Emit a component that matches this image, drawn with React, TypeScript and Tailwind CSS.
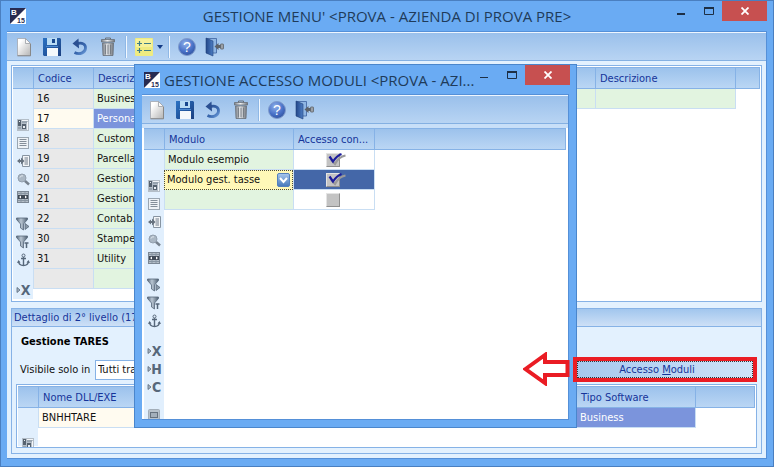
import React from "react";

const UI_FONT = "font-['DejaVu_Sans_Condensed','DejaVu_Sans',sans-serif]";
const TITLE_FONT = "font-['Open_Sans','Noto_Sans',sans-serif] text-[15px] leading-5 text-[#1f3b5a]";
const HEAD_BG = "bg-gradient-to-b from-[#9cc2ec] to-[#bad6f4]";

function Defs() {
  return (
    <svg width="0" height="0" className="absolute" aria-hidden="true">
      <defs>
        <linearGradient id="paper" x1="0" y1="0" x2="1" y2="1">
          <stop offset="0.2" stopColor="#ffffff" />
          <stop offset="1" stopColor="#b4b4b4" />
        </linearGradient>
        <linearGradient id="metal" x1="0" y1="0" x2="1" y2="0">
          <stop offset="0" stopColor="#7d828a" />
          <stop offset="0.45" stopColor="#f0f2f4" />
          <stop offset="1" stopColor="#70757d" />
        </linearGradient>
        <linearGradient id="disk" x1="0" y1="0" x2="1" y2="1">
          <stop offset="0" stopColor="#2a72c4" />
          <stop offset="1" stopColor="#1b3f80" />
        </linearGradient>
        <linearGradient id="arc" x1="0" y1="0" x2="1" y2="1">
          <stop offset="0" stopColor="#2a4f92" />
          <stop offset="0.6" stopColor="#3a69b0" />
          <stop offset="1" stopColor="#6b9ad8" />
        </linearGradient>
        <radialGradient id="ball" cx="0.4" cy="0.3" r="0.75">
          <stop offset="0" stopColor="#8fb0ea" />
          <stop offset="0.6" stopColor="#4a72c8" />
          <stop offset="1" stopColor="#2f519d" />
        </radialGradient>
        <linearGradient id="door" x1="0" y1="0" x2="1" y2="0">
          <stop offset="0" stopColor="#24488a" />
          <stop offset="1" stopColor="#4c7cc2" />
        </linearGradient>
        <linearGradient id="funnel" x1="0" y1="0" x2="1" y2="0">
          <stop offset="0" stopColor="#56677b" />
          <stop offset="0.4" stopColor="#b9c6d3" />
          <stop offset="1" stopColor="#4f6072" />
        </linearGradient>
        <linearGradient id="drop" x1="0" y1="0" x2="0" y2="1">
          <stop offset="0" stopColor="#a9c8ee" />
          <stop offset="1" stopColor="#4677ba" />
        </linearGradient>
      </defs>
    </svg>
  );
}

function AppLogo() {
  return (
    <svg width="16" height="16" viewBox="0 0 16 16" className="shrink-0" aria-hidden="true">
      <rect width="16" height="16" fill="#fff" />
      <path d="M0 0h16L0 16z" fill="#272b52" />
      <text x="1" y="7" fontSize="8" fontWeight="bold" fill="#fff" fontFamily="Liberation Sans">B</text>
      <text x="7" y="15" fontSize="7" fontWeight="bold" fill="#272b52" fontFamily="Liberation Sans">15</text>
    </svg>
  );
}

function NewIcon() {
  return (
    <svg width="18" height="20" viewBox="0 0 18 20">
      <path d="M2.500 1.500h8l5 5v12h-13z" fill="url(#paper)" stroke="#a3a7ae" strokeWidth="0.8" />
      <path d="M10.500 1.500v5h5z" fill="#f8f8f8" stroke="#9a9ea5" strokeWidth="0.8" />
      <path d="M2.500 18.800h13V7" fill="none" stroke="#888" strokeWidth="1" />
    </svg>
  );
}
function SaveIcon() {
  return (
    <svg width="20" height="20" viewBox="0 0 20 20">
      <path d="M1 1h17l1 1v17H2l-1-1z" fill="url(#disk)" />
      <rect x="5" y="1" width="10" height="7" fill="#b9dcf5" />
      <rect x="10" y="2" width="3" height="4" fill="#18488f" />
      <rect x="5" y="11" width="11" height="8" fill="#f4f8fb" />
      <path d="M4 9.500h12" stroke="#4d8ad0" strokeWidth="1" />
    </svg>
  );
}
function UndoIcon() {
  return (
    <svg width="18" height="20" viewBox="0 0 18 20">
      <path d="M6 6.800C11 4.800 15 7.500 14.500 11.500 14 16 8.500 18 3.500 15.500" fill="none" stroke="url(#arc)" strokeWidth="2.800" />
      <path d="M7.500 1.500L1.500 6.500l6.500 5z" fill="#2a4f92" />
    </svg>
  );
}
function TrashIcon() {
  return (
    <svg width="16" height="20" viewBox="0 0 16 20">
      <path d="M5.500 2.500V1h5v1.500" fill="none" stroke="#6a7078" />
      <path d="M1.500 2.500h13v2.500h-13z" fill="url(#metal)" stroke="#686e76" strokeWidth="0.8" />
      <path d="M2.500 6h11L13 18.500H3z" fill="url(#metal)" stroke="#686e76" strokeWidth="0.8" />
      <path d="M5.300 7.500v10M8 7.500v10M10.700 7.500v10" stroke="#6a7078" strokeWidth="1" />
    </svg>
  );
}
function ListIcon() {
  return (
    <svg width="18" height="18" viewBox="0 0 18 18">
      <rect width="18" height="18" rx="1" fill="#efeb80" />
      <rect x="1" y="1" width="16" height="8" fill="#faf7ae" opacity="0.6" />
      <path d="M2 5.500h5M4.500 3v5M2 12.500h5M4.500 10v5M9 5.500h7M9 12.500h7" stroke="#3e7c85" strokeWidth="1.200" />
    </svg>
  );
}
function HelpIcon() {
  return (
    <svg width="20" height="20" viewBox="0 0 20 20">
      <circle cx="10" cy="10" r="8.500" fill="url(#ball)" stroke="#7f9bcc" strokeWidth="1" />
      <text x="10" y="15" fontSize="14" textAnchor="middle" fill="#fff" fontFamily="Liberation Sans">?</text>
    </svg>
  );
}
function ExitIcon() {
  return (
    <svg width="20" height="20" viewBox="0 0 20 20">
      <path d="M1.500 1.500h10V16h-10z" fill="#8fb6e4" stroke="#3d62a0" strokeWidth="0.800" />
      <path d="M1 1l7 3v15l-7-3z" fill="url(#door)" stroke="#24437c" strokeWidth="0.600" />
      <path d="M9.500 9.500L13.500 6v2H16v3h-2.500v2z" fill="#5d636b" />
      <rect x="15.500" y="7" width="3" height="5" rx="0.500" fill="#9ba0a6" stroke="#5d636b" strokeWidth="0.800" />
    </svg>
  );
}

function ToolButton({ label, children }: { label: string; children: React.ReactNode }) {
  return (
    <button type="button" aria-label={label} className="flex h-7 w-7 items-center justify-center">
      {children}
    </button>
  );
}
function Separator() {
  return (
    <span className="flex w-2 justify-center">
      <span className="h-[22px] w-[2px] border-l border-[#8fb8e6] bg-[#f2f8ff]" />
    </span>
  );
}
function Toolbar({ full }: { full?: boolean }) {
  return (
    <div
      className={
        "flex h-[29px] shrink-0 items-center border-b border-t border-b-[#84b0e2] border-t-[#eef6ff] bg-gradient-to-b from-[#9ac0eb] to-[#b8d4f3] " +
        (full ? "px-[3px]" : "px-px")
      }
    >
      <ToolButton label="Nuovo"><NewIcon /></ToolButton>
      <ToolButton label="Salva"><SaveIcon /></ToolButton>
      <ToolButton label="Ripristina"><UndoIcon /></ToolButton>
      <ToolButton label="Elimina"><TrashIcon /></ToolButton>
      <Separator />
      {full && (
        <>
          <button type="button" aria-label="Opzioni" className="flex h-7 w-[35px] items-center gap-1 pl-[5px]">
            <ListIcon />
            <svg width="6" height="4" viewBox="0 0 6 4"><path d="M0 0h6L3 4z" fill="#123a85" /></svg>
          </button>
          <Separator />
        </>
      )}
      <ToolButton label="Guida"><HelpIcon /></ToolButton>
      <ToolButton label="Esci"><ExitIcon /></ToolButton>
    </div>
  );
}

const DARK = "#56677a";

function Letter({ children }: { children: string }) {
  return (
    <svg width="14" height="18" viewBox="0 0 14 18" className="overflow-visible">
      <path d="M1 6.500v5L4 9z" fill="#a9b6c4" stroke={DARK} strokeWidth="0.800" />
      <text x="9.500" y="14" fontSize="14" fontWeight="bold" textAnchor="middle" fill={DARK} fontFamily="'Liberation Sans Narrow','DejaVu Sans Condensed'">
        {children}
      </text>
    </svg>
  );
}
function Funnel({ children }: { children: React.ReactNode }) {
  return (
    <svg width="14" height="14" viewBox="0 0 14 14">
      <path d="M.5 1h11v1.500L7.500 7v6l-3-2V7L.5 2.500z" fill="url(#funnel)" stroke={DARK} strokeWidth="0.800" />
      {children}
    </svg>
  );
}

const SIDE_ICONS: { name: string; gap?: boolean; big?: boolean; icon: React.ReactNode }[] = [
  {
    name: "Struttura",
    icon: (
      <svg width="12" height="12" viewBox="0 0 12 12">
        <path d="M0 0h12v12H0z" fill="#b4bec8" />
        <path d="M1 1h3v6H1zM5 5h4v5H5z" fill="#56626f" />
        <path d="M2 2h1v1H2zM6 7h2v2H6z" fill="#e9eef3" />
        <path d="M5 1.500h6M10.500 3v8" fill="none" stroke="#f3f6f9" />
        <path d="M5 3h5M1 9h3" fill="none" stroke="#7d8a97" />
      </svg>
    ),
  },
  {
    name: "Elenco",
    icon: (
      <svg width="12" height="12" viewBox="0 0 12 12">
        <rect x=".5" y=".5" width="11" height="11" fill="#eef2f6" stroke="#9aa6b2" />
        <path d="M2.500 2.500h7M2.500 4.500h7M2.500 6.500h7M2.500 8.500h7" stroke="#77828e" strokeWidth="0.900" />
      </svg>
    ),
  },
  {
    name: "Inserisci",
    icon: (
      <svg width="13" height="12" viewBox="0 0 13 12">
        <path d="M5.500.5h7v11h-7z" fill="#f3f6f9" stroke="#8794a2" />
        <path d="M7.500 3h3.500M7.500 5h3.500M7.500 7h3.500M7.500 9h3.500" stroke="#6f7b88" />
        <path d="M0 6l3-2.500v1.500h1V2.500L7.500 6 4 9.500V7H3v1.500z" fill="#66727f" />
      </svg>
    ),
  },
  {
    name: "Cerca",
    icon: (
      <svg width="13" height="13" viewBox="0 0 13 13">
        <path d="M7.500 7.500l4.500 4" stroke="#77828e" strokeWidth="2.500" />
        <circle cx="5" cy="5" r="4" fill="#aab7c4" stroke="#93a0ae" />
        <path d="M3 4.500c.5-1.500 2-2 3-1.500" stroke="#e8eef4" fill="none" />
      </svg>
    ),
  },
  {
    name: "Adatta",
    icon: (
      <svg width="12" height="12" viewBox="0 0 12 12">
        <rect x=".5" y=".5" width="11" height="11" fill="#b4bec8" stroke="#7b8794" />
        <path d="M1 2.500h10M1 9.500h10M4 1v10M8 1v10" stroke="#8895a2" />
        <rect x="1" y="4" width="10" height="4" fill="#414b57" />
        <path d="M2 6l2-1.500v3zM10 6L8 4.500v3z" fill="#fff" />
      </svg>
    ),
  },
  { name: "Filtra", gap: true, icon: <Funnel><path d="M9 6.500v6l4-3z" fill="#8c9aa9" stroke={DARK} strokeWidth="0.800" /></Funnel> },
  { name: "Filtra testo", icon: <Funnel><path d="M8.500 8h4M10.500 8v5" stroke={DARK} strokeWidth="1.500" /></Funnel> },
  {
    name: "Ancora",
    icon: (
      <svg width="13" height="14" viewBox="0 0 13 14">
        <circle cx="6.500" cy="2.500" r="1.500" fill="none" stroke={DARK} />
        <path d="M6.500 4v8.500M4 5.500h5M1.500 8.500c.5 3 2.500 4 5 4s4.500-1 5-4" fill="none" stroke={DARK} strokeWidth="1.400" />
        <path d="M0 10l1.500-3 2 2.500zM13 10l-1.500-3-2 2.500z" fill={DARK} />
      </svg>
    ),
  },
  { name: "Esporta X", gap: true, big: true, icon: <Letter>X</Letter> },
  { name: "Esporta H", icon: <Letter>H</Letter> },
  { name: "Esporta C", icon: <Letter>C</Letter> },
  {
    name: "Schermo",
    gap: true,
    big: true,
    icon: (
      <svg width="12" height="16" viewBox="0 0 12 16">
        <rect x=".5" y=".5" width="11" height="13" rx="1" fill="#b8c2cc" stroke="#a3aeb9" />
        <rect x="2.500" y="3.500" width="7" height="5" fill="#a3afbb" stroke="#66727f" />
      </svg>
    ),
  },
];

function SideStrip({ count }: { count: number }) {
  return (
    <div className="flex w-5 shrink-0 flex-col bg-[#e1effd]">
      <div className={"h-[22px] shrink-0 border-b border-t border-b-[#86b2e6] border-t-[#86b2e6] " + HEAD_BG} />
      <div className="flex flex-col pt-[27px]">
        {SIDE_ICONS.slice(0, count).map((s) => (
          <button
            key={s.name}
            type="button"
            aria-label={s.name}
            className={"flex h-[18px] w-5 shrink-0 items-center justify-center " + (s.big ? "mt-3" : s.gap ? "mt-[9px]" : "")}
          >
            {s.icon}
          </button>
        ))}
      </div>
    </div>
  );
}

function Th({ children, className = "" }: { children?: React.ReactNode; className?: string }) {
  return (
    <th
      scope="col"
      className={
        "h-[22px] overflow-hidden whitespace-nowrap border-b border-l border-t border-[#86b2e6] pb-0 pl-1 pr-0 pt-[2px] text-left font-normal text-[#15349a] " +
        HEAD_BG + " " + className
      }
    >
      {children}
    </th>
  );
}

const CELL = "h-5 overflow-hidden whitespace-nowrap border-b border-l border-[#c9def3] p-0 pl-[3px] ";

const MENU_ROWS: [string, string][] = [
  ["16", "Business"],
  ["17", "Persona"],
  ["18", "Custome"],
  ["19", "Parcella"],
  ["20", "Gestione"],
  ["21", "Gestione"],
  ["22", "Contab."],
  ["30", "Stampe"],
  ["31", "Utility"],
  ["", ""],
];

function WindowButtons({ small }: { small?: boolean }) {
  return (
    <div className="flex shrink-0 self-start">
      <button type="button" aria-label="Riduci a icona" className="flex h-5 w-7 items-center justify-center">
        <svg width="8" height="8" viewBox="0 0 8 8"><path d={small ? "M0 6.500h8" : "M0 7h8"} stroke="#1d2f45" strokeWidth={small ? 1 : 2} /></svg>
      </button>
      <button type="button" aria-label="Ingrandisci" className="flex h-5 w-[27px] items-center justify-center">
        <svg width="10" height="8" viewBox="0 0 10 8">
          <path d="M.5.500h9v7h-9z" fill="none" stroke="#1d2f45" /><path d="M0 1h10" stroke="#1d2f45" strokeWidth="2" />
        </svg>
      </button>
      <button type="button" aria-label="Chiudi" className="flex h-5 w-[45px] items-center justify-center bg-[#c75050]">
        <svg width="8" height="8" viewBox="0 0 8 8"><path d="M.5.500l7 7M7.500.500l-7 7" stroke="#fff" strokeWidth="1.800" /></svg>
      </button>
    </div>
  );
}

function Tick({ label, checked }: { label: string; checked: boolean }) {
  return (
    <label className="relative mx-auto flex h-[18px] w-5 items-center">
      <input
        type="checkbox"
        aria-label={label}
        defaultChecked={checked}
        className="peer m-0 size-[14px] appearance-none border border-[#8f8f8f] border-l-[#e4e4e4] border-t-[#e4e4e4] bg-[#c3c3c3]"
      />
      <svg width="20" height="14" viewBox="0 0 20 14" className="pointer-events-none absolute left-0 top-px hidden peer-checked:block" aria-hidden="true">
        <path d="M5 8l4 4c2-4 5-7.500 10.500-8.500" fill="none" stroke="#9a9a9a" strokeWidth="2.200" />
        <path d="M3.500 4.500l3.500 5C9 6.500 11.500 3.500 15.500 2" fill="none" stroke="#1c1c9c" strokeWidth="2.200" />
      </svg>
    </label>
  );
}

function AccessDialog() {
  return (
    <section
      aria-label="Gestione accesso moduli"
      className="absolute bottom-[38px] left-[133px] right-[196px] top-[63px] flex flex-col border border-[#4a86cc] bg-[#6aabf3] px-[7px] pb-[7px]"
    >
      <header className="-mr-px flex h-[29px] shrink-0 items-center gap-1 pl-[2px]">
        <AppLogo />
        <h2 className={"min-w-0 flex-1 whitespace-nowrap " + TITLE_FONT}>
          GESTIONE ACCESSO MODULI &lt;PROVA - AZI...
        </h2>
        <WindowButtons small />
      </header>
      <div className="flex min-h-0 flex-1 flex-col overflow-hidden border-b border-r border-t border-[#5590d8] bg-white">
        <Toolbar />
        <div className="h-1 shrink-0 bg-[#c8dff8]" />
        <div className="mr-[2px] flex min-h-0 flex-1 pl-[2px]">
          <SideStrip count={12} />
          <table className="w-full table-fixed border-separate border-spacing-0 self-start">
            <colgroup>
              <col className="w-[129px]" />
              <col className="w-[81px]" />
              <col />
            </colgroup>
            <thead>
              <tr><Th>Modulo</Th><Th>Accesso con...</Th><Th className="border-r" /></tr>
            </thead>
            <tbody>
              <tr>
                <td className={CELL + "bg-[#e2f4e0]"}>Modulo esempio</td>
                <td className={CELL + "bg-white"}><Tick label="Accesso Modulo esempio" checked /></td>
                <td className="border-l border-[#c9def3]" />
              </tr>
              <tr>
                <td className="h-5 border border-dotted border-[#4b4b3c] bg-[#fff8b8] p-0">
                  <div className="flex items-center pr-[2px]">
                    <select aria-label="Modulo" className="h-[17px] min-w-0 flex-1 appearance-none bg-transparent p-0 pl-[2px] outline-none">
                      <option>Modulo gest. tasse</option>
                    </select>
                    <svg width="13" height="14" viewBox="0 0 13 14" className="pointer-events-none" aria-hidden="true">
                      <rect x=".5" y=".5" width="12" height="13" rx="1.500" fill="url(#drop)" stroke="#5581bd" />
                      <path d="M3 5l3.500 4L10 5" fill="none" stroke="#fff" strokeWidth="2" />
                    </svg>
                  </div>
                </td>
                <td className={CELL + "bg-[#4467a8]"}><Tick label="Accesso Modulo gest. tasse" checked /></td>
                <td className="border-l border-[#c9def3]" />
              </tr>
              <tr>
                <td className={CELL + "bg-[#e2f4e0]"} />
                <td className={CELL + "bg-white"}><Tick label="Accesso nuovo modulo" checked={false} /></td>
                <td className="border-l border-[#c9def3]" />
              </tr>
            </tbody>
          </table>
        </div>
      </div>
    </section>
  );
}

export default function App() {
  return (
    <main className={"relative flex h-screen w-full flex-col overflow-hidden border border-[#4a7fc0] bg-[#6aabf3] px-[6px] pb-[7px] text-[11px] leading-[14px] text-[#111] " + UI_FONT}>
      <Defs />
      <header className="flex h-[30px] shrink-0 items-center pl-[3px]">
        <AppLogo />
        <h1 className={"min-w-0 flex-1 overflow-hidden whitespace-nowrap pl-[81px] text-center " + TITLE_FONT}>
          GESTIONE MENU&apos; &lt;PROVA - AZIENDA DI PROVA PRE&gt;
        </h1>
        <WindowButtons />
      </header>
      <div className="flex min-h-0 flex-1 flex-col border border-l-0 border-[#5590d8] bg-[#e3f1fe]">
        <Toolbar full />
        <div className="flex min-h-0 flex-1 flex-col gap-[6px] p-1">
          <div className="flex shrink-0 border border-[#86b2e6] bg-white px-px pb-[2px] pt-px">
            <SideStrip count={9} />
            <table className="w-full min-w-0 flex-1 table-fixed border-separate border-spacing-0 self-start">
              <colgroup>
                <col className="w-[60px]" />
                <col />
              </colgroup>
              <thead><tr><Th>Codice</Th><Th>Descrizione</Th></tr></thead>
              <tbody>
                {MENU_ROWS.map(([code, text], i) => (
                  <tr key={i}>
                    <td className={CELL + (code === "17" ? "bg-[#fffbf0]" : "bg-[#e9e9e9]")}>{code}</td>
                    <td className={CELL + (code === "17" ? "bg-[#7b94dc] text-white" : "bg-[#e2f4e0]")}>{text}</td>
                  </tr>
                ))}
              </tbody>
            </table>
            <table className="w-[265px] shrink-0 table-fixed border-separate border-spacing-0 self-start">
              <colgroup>
                <col />
                <col className="w-[140px]" />
                <col className="w-[25px]" />
              </colgroup>
              <thead><tr><Th>Codice</Th><Th>Descrizione</Th><Th className="border-r" /></tr></thead>
              <tbody>
                <tr>
                  <td className={CELL + "bg-[#e2f4e0]"} />
                  <td className={CELL + "bg-[#e2f4e0]"} />
                  <td className="border-l border-[#c9def3]" />
                </tr>
              </tbody>
            </table>
          </div>

          <section className="flex min-h-0 flex-1 flex-col border border-[#86b2e6]">
            <h2 className="h-[18px] shrink-0 overflow-hidden whitespace-nowrap border-b border-[#86b2e6] bg-gradient-to-b from-[#a2c6ee] to-[#cde0f6] pl-[2px] leading-[17px] text-[#15349a]">
              Dettaglio di 2° livello (170)
            </h2>
            <div className="flex min-h-0 flex-1 flex-col px-1 pb-[5px]">
              <h3 className="shrink-0 py-[8px] pl-[5px] font-bold text-black">Gestione TARES</h3>
              <div className="flex h-[25px] shrink-0 items-center pl-1">
                <label htmlFor="visible" className="w-[75px]">Visibile solo in</label>
                <select id="visible" className="h-5 w-[120px] appearance-none border border-[#86b2e6] bg-white pl-[2px]">
                  <option>Tutti tranne</option>
                </select>
                <button type="button" className="relative z-10 ml-auto h-[25px] w-[184px] border-[4px] border-[#ea1c24] bg-gradient-to-r from-[#a6c8ee] to-[#cfe3f8] text-[#15349a]">
                  <span className="flex h-full items-center justify-center border border-dotted border-[#333] pr-4">
                    <span className="whitespace-pre">Accesso <u>M</u>oduli</span>
                  </span>
                </button>
              </div>
              <div className="mt-[2px] flex min-h-0 flex-1 overflow-hidden border border-[#86b2e6] bg-white p-px">
                <SideStrip count={1} />
                <table className="w-full table-fixed border-separate border-spacing-0 self-start">
                  <colgroup>
                    <col className="w-[180px]" />
                    <col />
                    <col className="w-[119px]" />
                    <col className="w-[60px]" />
                  </colgroup>
                  <thead><tr><Th>Nome DLL/EXE</Th><Th>Nome</Th><Th>Tipo Software</Th><Th className="border-r" /></tr></thead>
                  <tbody>
                    <tr>
                      <td className={CELL + "bg-[#fffbf0]"}>BNHHTARE</td>
                      <td className={CELL + "bg-[#fffbf0]"} />
                      <td className={CELL + "bg-[#7b94dc] text-white"}>Business</td>
                      <td className="border-l border-[#c9def3]" />
                    </tr>
                  </tbody>
                </table>
              </div>
            </div>
          </section>
        </div>
      </div>

      <AccessDialog />
      <svg width="47" height="34" viewBox="0 0 47 34" className="absolute bottom-[80px] right-[203px]" aria-hidden="true">
        <path d="M2.500 17L22 3v7h22.500v13H22v8z" fill="#fff" stroke="#ea1c24" strokeWidth="4" />
      </svg>
    </main>
  );
}
